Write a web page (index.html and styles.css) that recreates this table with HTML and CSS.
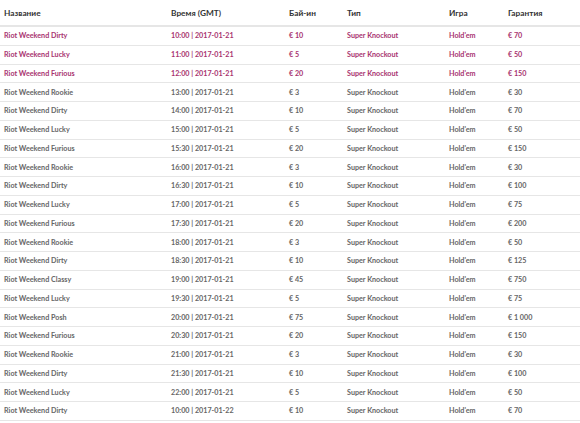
FILE: index.html
```html
<!DOCTYPE html>
<html>
<head>
<meta charset="utf-8">
<link rel="stylesheet" href="styles.css">
</head>
<body>
<table class="schedule">
<thead>
<tr><th class="c-name">Название</th><th class="c-time">Время (GMT)</th><th class="c-buy">Бай-ин</th><th class="c-type">Тип</th><th class="c-game">Игра</th><th class="c-gar">Гарантия</th></tr>
</thead>
<tbody>
<tr class="hl"><td>Riot Weekend Dirty</td><td>10:00 | 2017-01-21</td><td>€ 10</td><td>Super Knockout</td><td>Hold'em</td><td>€ 70</td></tr>
<tr class="hl"><td>Riot Weekend Lucky</td><td>11:00 | 2017-01-21</td><td>€ 5</td><td>Super Knockout</td><td>Hold'em</td><td>€ 50</td></tr>
<tr class="hl"><td>Riot Weekend Furious</td><td>12:00 | 2017-01-21</td><td>€ 20</td><td>Super Knockout</td><td>Hold'em</td><td>€ 150</td></tr>
<tr><td>Riot Weekend Rookie</td><td>13:00 | 2017-01-21</td><td>€ 3</td><td>Super Knockout</td><td>Hold'em</td><td>€ 30</td></tr>
<tr><td>Riot Weekend Dirty</td><td>14:00 | 2017-01-21</td><td>€ 10</td><td>Super Knockout</td><td>Hold'em</td><td>€ 70</td></tr>
<tr><td>Riot Weekend Lucky</td><td>15:00 | 2017-01-21</td><td>€ 5</td><td>Super Knockout</td><td>Hold'em</td><td>€ 50</td></tr>
<tr><td>Riot Weekend Furious</td><td>15:30 | 2017-01-21</td><td>€ 20</td><td>Super Knockout</td><td>Hold'em</td><td>€ 150</td></tr>
<tr><td>Riot Weekend Rookie</td><td>16:00 | 2017-01-21</td><td>€ 3</td><td>Super Knockout</td><td>Hold'em</td><td>€ 30</td></tr>
<tr><td>Riot Weekend Dirty</td><td>16:30 | 2017-01-21</td><td>€ 10</td><td>Super Knockout</td><td>Hold'em</td><td>€ 100</td></tr>
<tr><td>Riot Weekend Lucky</td><td>17:00 | 2017-01-21</td><td>€ 5</td><td>Super Knockout</td><td>Hold'em</td><td>€ 75</td></tr>
<tr><td>Riot Weekend Furious</td><td>17:30 | 2017-01-21</td><td>€ 20</td><td>Super Knockout</td><td>Hold'em</td><td>€ 200</td></tr>
<tr><td>Riot Weekend Rookie</td><td>18:00 | 2017-01-21</td><td>€ 3</td><td>Super Knockout</td><td>Hold'em</td><td>€ 50</td></tr>
<tr><td>Riot Weekend Dirty</td><td>18:30 | 2017-01-21</td><td>€ 10</td><td>Super Knockout</td><td>Hold'em</td><td>€ 125</td></tr>
<tr><td>Riot Weekend Classy</td><td>19:00 | 2017-01-21</td><td>€ 45</td><td>Super Knockout</td><td>Hold'em</td><td>€ 750</td></tr>
<tr><td>Riot Weekend Lucky</td><td>19:30 | 2017-01-21</td><td>€ 5</td><td>Super Knockout</td><td>Hold'em</td><td>€ 75</td></tr>
<tr><td>Riot Weekend Posh</td><td>20:00 | 2017-01-21</td><td>€ 75</td><td>Super Knockout</td><td>Hold'em</td><td>€ 1 000</td></tr>
<tr><td>Riot Weekend Furious</td><td>20:30 | 2017-01-21</td><td>€ 20</td><td>Super Knockout</td><td>Hold'em</td><td>€ 150</td></tr>
<tr><td>Riot Weekend Rookie</td><td>21:00 | 2017-01-21</td><td>€ 3</td><td>Super Knockout</td><td>Hold'em</td><td>€ 30</td></tr>
<tr><td>Riot Weekend Dirty</td><td>21:30 | 2017-01-21</td><td>€ 10</td><td>Super Knockout</td><td>Hold'em</td><td>€ 100</td></tr>
<tr><td>Riot Weekend Lucky</td><td>22:00 | 2017-01-21</td><td>€ 5</td><td>Super Knockout</td><td>Hold'em</td><td>€ 50</td></tr>
<tr><td>Riot Weekend Dirty</td><td>10:00 | 2017-01-22</td><td>€ 10</td><td>Super Knockout</td><td>Hold'em</td><td>€ 70</td></tr>
</tbody>
</table>
</body>
</html>
```

FILE: styles.css
```css
html, body {
  margin: 0;
  padding: 0;
  background: #ffffff;
}
.schedule {
  width: 580px;
  border-collapse: collapse;
  table-layout: fixed;
  font-family: "Lato", "Open Sans", sans-serif;
  font-size: 7.2px;
  color: #666666;
}
.schedule th {
  text-align: left;
  font-weight: 700;
  font-size: 8.3px;
  color: #333333;
  height: 25px;
  padding: 0 0 0 4px;
  border-bottom: 2px solid #e6e6e6;
  vertical-align: middle;
}
.schedule td {
  height: 17.76px;
  padding: 0 0 0 4px;
  border-bottom: 1px solid #e6e6e6;
  vertical-align: middle;
  white-space: nowrap;
  font-weight: 700;
  color: #666666;
}
.schedule .hl td {
  color: #a8336f;
}
.c-name { width: 163px; }
.c-time { width: 114px; }
.c-buy { width: 54px; }
.c-type { width: 98px; }
.c-game { width: 55px; }
.c-gar { width: auto; }
```
